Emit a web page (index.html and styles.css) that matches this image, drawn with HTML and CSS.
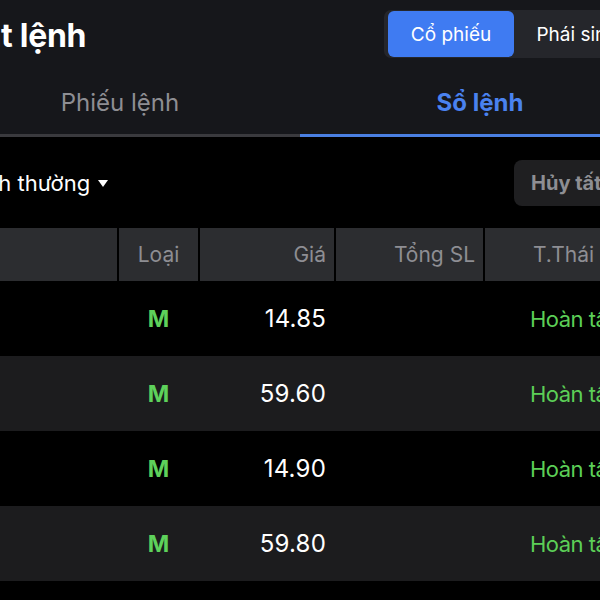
FILE: index.html
```html
<!DOCTYPE html>
<html>

<head>
	<meta charset="utf-8" />
	<meta name="viewport" content="width=device-width">
	<link rel="stylesheet" href="styles.css">
</head>

<body>
	<div class="screen">
		<div class="top">
			<div class="top-bar">
				<h1 class="title">Đặt lệnh</h1>
				<div class="segment">
					<span class="seg-item active">Cổ phiếu</span>
					<span class="seg-item">Phái sinh</span>
				</div>
			</div>
			<div class="tabs">
				<div class="tab">Phiếu lệnh</div>
				<div class="tab active">Sổ lệnh</div>
			</div>
		</div>

		<div class="filter-row">
			<span class="filter">Lệnh thường <span class="caret"></span></span>
			<span class="cancel-all">Hủy tất cả</span>
		</div>

		<div class="table">
			<div class="row head">
				<div class="cell"></div>
				<div class="cell center">Loại</div>
				<div class="cell right">Giá</div>
				<div class="cell right">Tổng SL</div>
				<div class="cell status">T.Thái</div>
			</div>
			<div class="row">
				<div class="cell"></div>
				<div class="cell center side">M</div>
				<div class="cell right price">14.85</div>
				<div class="cell right"></div>
				<div class="cell status done">Hoàn tất</div>
			</div>
			<div class="row alt">
				<div class="cell"></div>
				<div class="cell center side">M</div>
				<div class="cell right price">59.60</div>
				<div class="cell right"></div>
				<div class="cell status done">Hoàn tất</div>
			</div>
			<div class="row">
				<div class="cell"></div>
				<div class="cell center side">M</div>
				<div class="cell right price">14.90</div>
				<div class="cell right"></div>
				<div class="cell status done">Hoàn tất</div>
			</div>
			<div class="row alt">
				<div class="cell"></div>
				<div class="cell center side">M</div>
				<div class="cell right price">59.80</div>
				<div class="cell right"></div>
				<div class="cell status done">Hoàn tất</div>
			</div>
		</div>
	</div>
</body>

</html>
```

FILE: styles.css
```css
body {
	margin: 0;
	background-color: #000;
	font-family: Inter, "Noto Sans", Arial, sans-serif;
	color: #fff;
	overflow: hidden;
}

.screen {
	width: 720px;
	margin-left: -60px;
}

.top {
	background-color: #16171b;
}

.top-bar {
	display: flex;
	align-items: center;
	justify-content: space-between;
	height: 70px;
	padding: 0 16px 0 20px;
}

.title {
	margin: 0;
	font-size: 32px;
	font-weight: 700;
	letter-spacing: -0.3px;
}

.segment {
	display: flex;
	padding: 1px 4px;
	background-color: #25262b;
	border-radius: 7px;
	margin-top: -2px;
}

.seg-item {
	width: 126px;
	height: 46px;
	display: flex;
	align-items: center;
	justify-content: center;
	font-size: 19px;
	border-radius: 6px;
	color: #fff;
}

.seg-item.active {
	background-color: #3f7bf2;
}

.tabs {
	display: grid;
	grid-template-columns: 1fr 1fr;
}

.tab {
	height: 64px;
	display: flex;
	align-items: center;
	justify-content: center;
	font-size: 24px;
	color: #8e8e93;
	border-bottom: 3px solid #3a3a3e;
}

.tab.active {
	color: #4a82ef;
	font-weight: 700;
	border-bottom-color: #4a7fe2;
}

.filter-row {
	display: flex;
	align-items: center;
	justify-content: space-between;
	height: 91px;
	padding: 0 0 0 20px;
}

.filter {
	font-size: 22px;
	display: flex;
	align-items: center;
	gap: 8px;
}

.caret {
	width: 0;
	height: 0;
	margin-top: 1px;
	border-left: 5px solid transparent;
	border-right: 5px solid transparent;
	border-top: 7px solid #fff;
}

.cancel-all {
	box-sizing: border-box;
	width: 146px;
	height: 46px;
	display: flex;
	align-items: center;
	padding-left: 17px;
	background-color: #1f1f21;
	border-radius: 8px;
	font-size: 20px;
	font-weight: 700;
	color: #8e8e93;
	white-space: nowrap;
}

.row {
	display: grid;
	grid-template-columns: 177px 79px 134px 147px 175px;
	column-gap: 2px;
	height: 75px;
	align-items: center;
}

.row.alt {
	background-color: #1c1c1e;
}

.row.head {
	height: 53px;
	align-items: stretch;
	background-color: #000;
}

.head .cell {
	background-color: #2c2d30;
	color: #8e8e93;
	font-size: 21px;
	display: flex;
	align-items: center;
}

.head .cell.center {
	justify-content: center;
}

.head .cell.right {
	justify-content: flex-end;
}

.cell {
	font-size: 22px;
	white-space: nowrap;
}

.cell.center {
	text-align: center;
}

.cell.right {
	text-align: right;
	padding-right: 8px;
}

.cell.status {
	padding-left: 45px;
}

.head .cell.status {
	padding-left: 48px;
}

.side {
	color: #5ed15b;
	font-weight: 700;
	font-size: 23px;
}

.price {
	color: #fff;
	font-size: 24px;
	letter-spacing: 0.2px;
}

.done {
	color: #5ccf57;
	letter-spacing: -0.5px;
}
```
